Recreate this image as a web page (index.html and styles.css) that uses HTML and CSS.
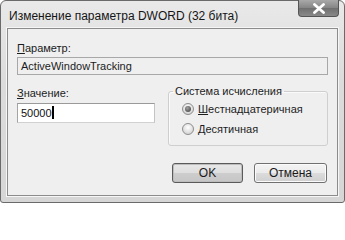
FILE: index.html
```html
<!DOCTYPE html>
<html lang="ru">
<head>
<meta charset="utf-8">
<title>Изменение параметра DWORD (32 бита)</title>
<link rel="stylesheet" href="styles.css">
</head>
<body>
<div class="window">
  <div class="titlebar">
    <span class="title">Изменение параметра DWORD (32 бита)</span>
    <div class="close">
      <svg width="14" height="11" viewBox="0 0 14 11"><path d="M2.5 1.5 L11.5 9.5 M11.5 1.5 L2.5 9.5" stroke="#ffffff" stroke-width="2.8" stroke-linecap="round"/></svg>
    </div>
  </div>
  <div class="client">
    <div class="label"><u>П</u>араметр:</div>
    <div class="field readonly">ActiveWindowTracking</div>
    <div class="middle">
      <div class="left">
        <div class="label"><u>З</u>начение:</div>
        <div class="field edit">50000<span class="caret"></span></div>
      </div>
      <fieldset class="group">
        <legend>Система исчисления</legend>
        <div class="radio-row"><span class="radio checked"></span><span><u>Ш</u>естнадцатеричная</span></div>
        <div class="radio-row"><span class="radio"></span><span><u>Д</u>есятичная</span></div>
      </fieldset>
    </div>
    <div class="buttons">
      <div class="btn default">OK</div>
      <div class="btn">Отмена</div>
    </div>
  </div>
</div>
</body>
</html>
```
FILE: styles.css
```css
html, body {
  margin: 0;
  padding: 0;
  background: #ffffff;
}
body {
  font-family: "Liberation Sans", Arial, sans-serif;
  font-size: 11px;
  color: #1c1c1c;
}
.window {
  width: 345px;
  height: 203px;
  box-sizing: border-box;
  background: linear-gradient(#e9e9e9, #dcdcdc 40%, #d6d6d6);
  border: 1px solid #6a6a6a;
  border-radius: 6px 6px 3px 3px;
  padding: 0 6px 6px 6px;
  display: flex;
  flex-direction: column;
}
.titlebar {
  height: 27px;
  display: flex;
  align-items: flex-start;
  justify-content: space-between;
}
.title {
  font-size: 12px;
  color: #151515;
  margin: 8px 0 0 2px;
}
.close {
  width: 41px;
  height: 17px;
  margin-right: -1px;
  margin-top: -1px;
  box-sizing: border-box;
  border: 1px solid #555;
  border-top: none;
  border-radius: 0 0 4px 4px;
  background: linear-gradient(#a9a9a9, #858585 50%, #6f6f6f 51%, #8a8a8a);
  display: flex;
  align-items: center;
  justify-content: center;
}
.client {
  flex: 1;
  background: #efefef;
  border: 1px solid #8c8c8c;
  box-shadow: 0 0 0 1px #f6f6f6;
  padding: 0 9px 0 9px;
  display: flex;
  flex-direction: column;
}
.label {
  line-height: 14px;
  height: 14px;
}
.client > .label {
  margin-top: 12px;
}
u {
  text-decoration: underline;
  text-underline-offset: 1px;
}
.field {
  box-sizing: border-box;
  border: 1px solid #a8a8a8;
  line-height: 16px;
  padding: 0 3px;
}
.readonly {
  height: 18px;
  margin-top: 2px;
  background: #efefef;
}
.middle {
  display: flex;
  justify-content: space-between;
  margin-top: 11px;
}
.left {
  width: 138px;
  display: flex;
  flex-direction: column;
}
.edit {
  height: 20px;
  margin-top: 3px;
  background: #ffffff;
  border-color: #9a9a9a #c4c4c4 #d0d0d0 #a4a4a4;
  line-height: 18px;
  padding-left: 3px;
  color: #111;
}
.caret {
  display: inline-block;
  width: 2px;
  height: 13px;
  background: #000;
  vertical-align: -2px;
}
.group {
  width: 160px;
  box-sizing: border-box;
  margin: -2px 0 0 0;
  padding: 1px 6px 4px 13px;
  border: 1px solid #cfcfcf;
  border-radius: 3px;
  box-shadow: inset 1px 1px 0 #fafafa;
  height: 62px;
}
.group legend {
  padding: 0 2px;
  margin-left: -9px;
  line-height: 14px;
  font-size: 11px;
}
.radio-row {
  display: flex;
  align-items: center;
  gap: 4px;
  height: 20px;
  font-size: 11px;
}
.radio {
  width: 12px;
  height: 12px;
  box-sizing: border-box;
  border-radius: 50%;
  border: 1px solid #8e8e8e;
  background: radial-gradient(circle at 50% 35%, #ffffff, #dcdcdc 65%, #c4c4c4);
  display: flex;
  align-items: center;
  justify-content: center;
}
.radio.checked::after {
  content: "";
  width: 6px;
  height: 6px;
  border-radius: 50%;
  background: radial-gradient(circle at 40% 35%, #a0a0a0, #3a3a3a);
}
.buttons {
  display: flex;
  justify-content: flex-end;
  gap: 11px;
  margin-top: 17px;
  margin-right: 1px;
}
.btn {
  width: 73px;
  height: 20px;
  box-sizing: border-box;
  border: 1px solid #707070;
  border-radius: 3px;
  background: linear-gradient(#f4f4f4, #ebebeb 50%, #dcdcdc 51%, #cfcfcf);
  box-shadow: inset 0 0 0 1px #fbfbfb;
  display: flex;
  align-items: center;
  justify-content: center;
  font-size: 12px;
  color: #1a1a1a;
}
.btn.default {
  width: 71px;
  border-color: #5a5a5a;
  background: linear-gradient(#e8e8e8, #dedede 50%, #cdcdcd 51%, #c6c6c6);
  box-shadow: inset 0 0 0 1px #bdbdbd;
}
```
